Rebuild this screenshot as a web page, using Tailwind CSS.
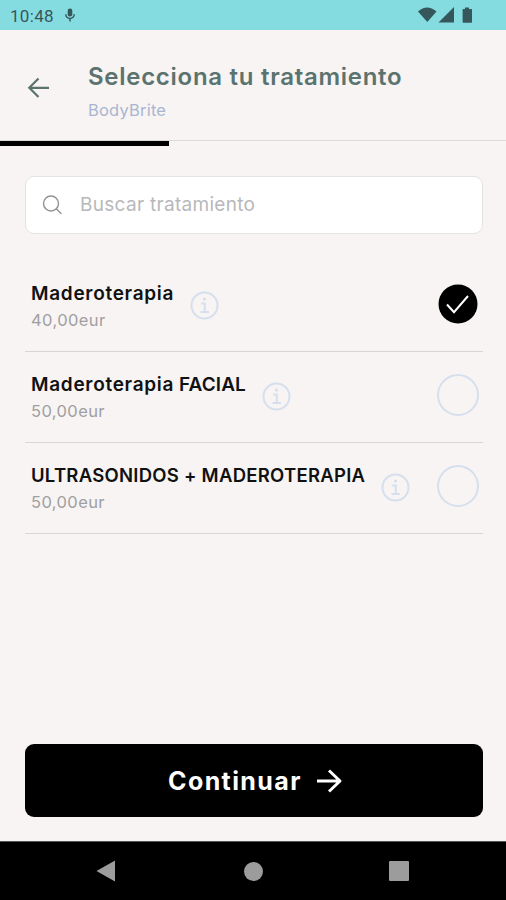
<!DOCTYPE html>
<html lang="es">
<head>
<meta charset="utf-8">
<title>Selecciona tu tratamiento</title>
<script src="https://cdn.jsdelivr.net/npm/@tailwindcss/browser@4"></script>
</head>
<body class="bg-[#f7f4f3]">
<div class="flex h-[900px] w-[506px] flex-col overflow-hidden bg-[#f7f4f3] font-['Inter',sans-serif] whitespace-nowrap">
  <div class="flex h-[30px] shrink-0 items-center bg-[#85dce0] pl-[10px] pr-[33px] text-[#35575b]">
    <span class="pt-px font-['Roboto',sans-serif] text-[17px] leading-5 tracking-[0.3px]">10:48</span>
    <svg class="ml-[10px] h-[14px] w-[12px]" viewBox="0 0 12 14"><rect x="3.700" y="0.500" width="4.600" height="8" rx="2.300" fill="currentColor"/><path d="M1.800 6.300a4.200 4.200 0 0 0 8.400 0M6 10.500V13.500" fill="none" stroke="currentColor" stroke-width="1.500"/></svg>
    <svg class="ml-auto h-[16px] w-[55px]" viewBox="0 0 55 16" fill="currentColor"><path d="M0 4.500Q9-3.500 18.500 4.500L9.300 15z"/><path d="M36 0v15.500H20.500z"/><path d="M47 .5h4v1.500h2.500q.5 0 .5.500v12.500q0 .7-.7.700h-8q-.7 0-.7-.7V2.500q0-.5.500-.5H47z"/></svg>
  </div>
  <header class="flex h-[111px] shrink-0 border-b border-[#dedad9] pl-[26px] pt-[30px]">
    <svg class="mt-[15px] h-[26px] w-[26px]" viewBox="0 0 26 26" fill="none" stroke="#5b736e" stroke-width="2.200"><path d="M23 12.800H3.500M12.500 3.500L3.300 12.800l9.200 9.200"/></svg>
    <div class="ml-[36px]">
      <h1 class="text-[24px] leading-[34px] font-semibold tracking-[0.72px] text-[#5b736e]">Selecciona tu tratamiento</h1>
      <p class="text-[16.500px] leading-[32px] tracking-[0.2px] text-[#a9b6d1]">BodyBrite</p>
    </div>
  </header>
  <div class="h-[5px] w-[169px] shrink-0 bg-black"></div>
  <main class="flex grow flex-col px-[25px] pt-[30px]">
    <label class="-mr-[2px] flex h-[58px] shrink-0 items-center rounded-[9px] border border-[#e5e2e2] bg-white pl-[16px]">
      <svg class="h-[22px] w-[22px]" viewBox="0 0 22 22" fill="none" stroke="#929292" stroke-width="1.400" stroke-linecap="round"><circle cx="9" cy="9.500" r="7.500"/><path d="M14.500 15l4.500 4.500"/></svg>
      <span class="ml-[16px] text-[19px] leading-7 tracking-[0.3px] text-[#b8b8bb]">Buscar tratamiento</span>
    </label>
    <ul class="-mr-[2px] mt-[27px]">
      <li class="flex h-[91px] border-b border-[#d9d5d5] pl-[6px] pr-[4px]">
        <div class="pt-[18px]"><p class="text-[19px] leading-[30px] font-semibold tracking-[0.7px] text-[#111]">Maderoterapia</p><p class="text-[16.500px] leading-[23px] tracking-[0.4px] text-[#a19fa1]">40,00eur</p></div>
        <svg class="ml-[16px] mt-[30px] h-[29px] w-[29px]" viewBox="0 0 29 29" fill="none" stroke="#d6dfed" stroke-width="2"><circle cx="14.500" cy="14.500" r="13"/><path d="M11.300 12.500h3.500v8.500M10.500 21h8.500"/><circle cx="14.500" cy="8" r="1.600" fill="#d6dfed" stroke="none"/></svg>
        <svg class="ml-auto mt-[22px] h-[42px] w-[42px]" viewBox="0 0 42 42"><circle cx="21" cy="21" r="19.500"/><path d="M10 21.500l7 7.700L31 13" fill="none" stroke="#fff" stroke-width="2"/></svg>
      </li>
      <li class="flex h-[91px] border-b border-[#d9d5d5] pl-[6px] pr-[4px]">
        <div class="pt-[18px]"><p class="text-[19px] leading-[30px] font-semibold text-[#111]"><span class="tracking-[0.7px]">Maderoterapia</span><span class="tracking-[0.1px]"> FACIAL</span></p><p class="text-[16.500px] leading-[23px] tracking-[0.4px] text-[#a19fa1]">50,00eur</p></div>
        <svg class="ml-[16px] mt-[30px] h-[29px] w-[29px]" viewBox="0 0 29 29" fill="none" stroke="#d6dfed" stroke-width="2"><circle cx="14.500" cy="14.500" r="13"/><path d="M11.300 12.500h3.500v8.500M10.500 21h8.500"/><circle cx="14.500" cy="8" r="1.600" fill="#d6dfed" stroke="none"/></svg>
        <span class="ml-auto mt-[22px] h-[42px] w-[42px] rounded-full border-2 border-[#d6dfed]"></span>
      </li>
      <li class="flex h-[91px] border-b border-[#d9d5d5] pl-[6px] pr-[4px]">
        <div class="pt-[18px]"><p class="text-[18.500px] leading-[28px] font-semibold tracking-[0.26px] text-[#111]">ULTRASONIDOS + MADEROTERAPIA</p><p class="text-[16.500px] leading-[27px] tracking-[0.4px] text-[#a19fa1]">50,00eur</p></div>
        <svg class="ml-[16px] mt-[30px] h-[29px] w-[29px]" viewBox="0 0 29 29" fill="none" stroke="#d6dfed" stroke-width="2"><circle cx="14.500" cy="14.500" r="13"/><path d="M11.300 12.500h3.500v8.500M10.500 21h8.500"/><circle cx="14.500" cy="8" r="1.600" fill="#d6dfed" stroke="none"/></svg>
        <span class="ml-auto mt-[22px] h-[42px] w-[42px] rounded-full border-2 border-[#d6dfed]"></span>
      </li>
    </ul>
    <button class="-mr-[2px] mt-auto mb-[24px] flex h-[73px] shrink-0 items-center rounded-[9px] bg-black pl-[143px] text-white">
      <span class="pt-[2px] text-[25px] font-bold tracking-[1.400px]">Continuar</span>
      <svg class="ml-[13px] h-[26px] w-[28px]" viewBox="0 0 28 26" fill="none" stroke="currentColor" stroke-width="3" stroke-linejoin="round"><path d="M2 13h23M14 2.500L25 13 14 23.500"/></svg>
    </button>
  </main>
  <nav class="flex h-[59px] shrink-0 items-center border-t border-[#555] bg-black pl-[96px] text-[#9c9c9c]">
    <svg class="h-[22px] w-[19px]" viewBox="0 0 19 22"><path d="M.5 11L19 .5v21z" fill="currentColor"/></svg>
    <span class="ml-[129px] h-[19px] w-[19px] rounded-full bg-[#9c9c9c]"></span>
    <span class="ml-[126px] h-[20px] w-[20px] rounded-[1px] bg-[#9c9c9c]"></span>
  </nav>
</div>
</body>
</html>
